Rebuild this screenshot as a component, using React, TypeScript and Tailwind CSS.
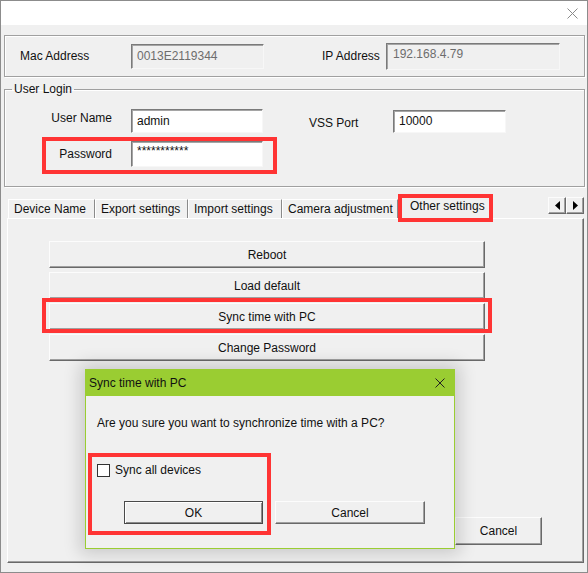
import React from "react";

// classic 3D edges
const sunken =
  "border border-t-[#7a7a7a] border-l-[#7a7a7a] border-r-[#f7f7f7] border-b-[#f7f7f7] shadow-[inset_1px_1px_0_#a5a5a5]";
const raised =
  "border border-t-[#fcfcfc] border-l-[#fcfcfc] border-r-[#696969] border-b-[#696969] shadow-[inset_-1px_-1px_0_#a0a0a0] bg-[#f0f0f0]";
const redMark = "absolute border-4 border-[#ff3434] pointer-events-none";

const CloseIcon = ({ size, color }: { size: number; color: string }) => (
  <svg width={size} height={size} viewBox={`0 0 ${size} ${size}`}>
    <path
      d={`M0.5 0.5L${size - 0.5} ${size - 0.5}M${size - 0.5} 0.5L0.5 ${size - 0.5}`}
      stroke={color}
      strokeWidth="1"
    />
  </svg>
);

const Tab = ({ label, width }: { label: string; width: string }) => (
  <div
    className={`${width} h-[19px] flex items-center px-[5px] whitespace-nowrap border-t border-l border-r border-t-white border-l-white border-r-[#8a8a8a] bg-[#f0f0f0]`}
  >
    {label}
  </div>
);

const PanelButton = ({ label }: { label: string }) => (
  <div className={`${raised} w-[436px] h-[27px] flex items-center justify-center`}>{label}</div>
);

export default function App() {
  return (
    <div className="w-[588px] h-[573px] bg-[#f0f0f0] border border-[#8c8c8c] relative flex flex-col overflow-hidden font-['Liberation_Sans',Arial,sans-serif] text-[12px] leading-[14px] text-[#111]">
      {/* title bar */}
      <div className="h-[24px] shrink-0 bg-white flex items-center justify-end pr-[9px]">
        <CloseIcon size={11} color="#8a8a8a" />
      </div>

      {/* device addresses */}
      <div className="mt-[10px] ml-[3px] w-[581px] h-[42px] shrink-0 flex items-center pl-[15px] border border-[#a0a0a0] shadow-[inset_1px_1px_0_#fff,1px_1px_0_#fff]">
        <span className="w-[111px]">Mac Address</span>
        <div className={`${sunken} w-[133px] h-[25px] pl-[5px] pt-[4px] text-[#6d6d6d]`}>0013E2119344</div>
        <span className="ml-[58px] w-[64px]">IP Address</span>
        <div className={`${sunken} w-[174px] h-[27px] pl-[6px] pt-[3px] text-[#6d6d6d]`}>192.168.4.79</div>
      </div>

      {/* login */}
      <fieldset className="mt-[5px] ml-[3px] w-[581px] shrink-0 border border-[#a0a0a0] pb-[19px] shadow-[inset_1px_1px_0_#fff,1px_1px_0_#fff]">
        <legend className="ml-[7px] px-[2px] leading-[14px]">User Login</legend>
        <div className="mt-[13px] flex items-center h-[24px]">
          <span className="w-[108px] pr-[1px] text-right -mt-[6px]">User Name</span>
          <div className={`${sunken} ml-[18px] w-[132px] h-[24px] bg-white pl-[5px] flex items-center`}>admin</div>
          <span className="ml-[46px] w-[84px] mt-[4px]">VSS Port</span>
          <div className={`${sunken} w-[113px] h-[23px] bg-white pl-[5px] flex items-center`}>10000</div>
        </div>
        <div className="relative mt-[8px] flex items-center h-[26px]">
          <span className="w-[107px] text-right">Password</span>
          <div className={`${sunken} ml-[19px] w-[132px] h-[26px] bg-white pl-[5px] pt-[2px]`}>***********</div>
          <div className={`${redMark} left-[37px] top-[-4px] w-[235px] h-[37px]`} />
        </div>
      </fieldset>

      {/* tab strip */}
      <div className="mt-[8px] ml-[6px] w-[577px] h-[23px] shrink-0 flex items-end">
        <div className="ml-[1px]" />
        <Tab label="Device Name" width="w-[87px]" />
        <Tab label="Export settings" width="w-[93px]" />
        <Tab label="Import settings" width="w-[94px]" />
        <Tab label="Camera adjustment" width="w-[116px]" />
        <div className="relative z-10 w-[94px] h-[24px] -mb-[1px] flex items-center pl-[11px] pb-[3px] whitespace-nowrap bg-[#f0f0f0] border-t border-l border-r border-t-white border-l-white border-r-[#8a8a8a]">
          Other settings
          <div className={`${redMark} left-[-1px] top-[-2px] w-[95px] h-[28px]`} />
        </div>
        <div className="ml-auto mb-[4px] flex">
          <div className={`${raised} w-[18px] h-[17px] flex items-center justify-center`}>
            <svg width="5" height="9" viewBox="0 0 5 9">
              <path d="M5 0L0 4.5L5 9Z" fill="#000" />
            </svg>
          </div>
          <div className={`${raised} w-[18px] h-[17px] flex items-center justify-center`}>
            <svg width="5" height="9" viewBox="0 0 5 9">
              <path d="M0 0L5 4.5L0 9Z" fill="#000" />
            </svg>
          </div>
        </div>
      </div>

      {/* tab page */}
      <div className="ml-[6px] w-[577px] h-[345px] shrink-0 flex flex-col border border-t-white border-l-white border-r-[#696969] border-b-[#696969] shadow-[inset_-1px_-1px_0_#a0a0a0]">
        <div className="pt-[22px] pl-[41px] flex flex-col gap-[4px]">
          <PanelButton label="Reboot" />
          <PanelButton label="Load default" />
          <div className="relative">
            <PanelButton label="Sync time with PC" />
            <div className={`${redMark} left-[-7px] top-[-5px] w-[450px] h-[35px]`} />
          </div>
          <PanelButton label="Change Password" />
        </div>
        <div className="mt-auto flex justify-end gap-[10px] pr-[41px] pb-[17px]">
          <div className={`${raised} w-[87px] h-[28px] flex items-center justify-center`}>OK</div>
          <div className={`${raised} w-[87px] h-[28px] flex items-center justify-center`}>Cancel</div>
        </div>
      </div>

      {/* confirmation dialog */}
      <div className="absolute left-[84px] top-[368px] w-[370px] h-[180px] flex flex-col bg-[#f0f0f0] border border-[#9acd32] shadow-[0_0_16px_5px_rgba(0,0,0,0.16)]">
        <div className="h-[26px] shrink-0 bg-[#9acd32] flex items-center justify-between pl-[3px] pr-[9px]">
          <span>Sync time with PC</span>
          <CloseIcon size={10} color="#222" />
        </div>
        <div className="pl-[11px] pt-[20px]">Are you sure you want to synchronize time with a PC?</div>
        <div className="pl-[11px] mt-[33px] flex items-center">
          <div className="w-[13px] h-[13px] bg-white border border-[#333]" />
          <span className="ml-[5px]">Sync all devices</span>
        </div>
        <div className="pl-[38px] mt-[24px] flex gap-[12px]">
          <div className="w-[139px] h-[23px] border border-[#4a4a4a] bg-[#f0f0f0] shadow-[inset_1px_1px_0_#fff,inset_-1px_-1px_0_#8a8a8a] flex items-center justify-center">
            OK
          </div>
          <div className={`${raised} w-[150px] h-[23px] flex items-center justify-center`}>Cancel</div>
        </div>
        <div className={`${redMark} left-[2px] top-[83px] w-[183px] h-[82px]`} />
      </div>
    </div>
  );
}
